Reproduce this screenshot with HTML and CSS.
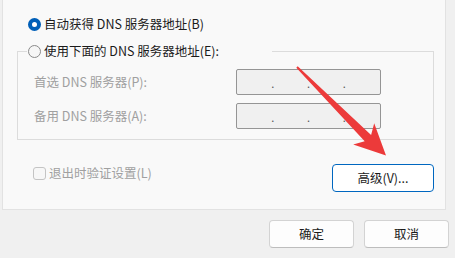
FILE: index.html
```html
<!DOCTYPE html>
<html lang="zh-CN">
<head>
<meta charset="utf-8">
<link rel="stylesheet" href="styles.css">
</head>
<body>
<div class="window">
  <div class="panel">
    <label class="radio-row first"><span class="radio on"></span><span>自动获得 DNS 服务器地址(B)</span></label>
    <fieldset class="group">
      <legend class="group-legend"><label class="radio-row"><span class="radio"></span><span>使用下面的 DNS 服务器地址(E):</span></label></legend>
      <div class="field-row">
        <span class="lbl">首选 DNS 服务器(P):</span>
        <div class="ip"><span class="seg"></span><span class="dot">.</span><span class="seg"></span><span class="dot">.</span><span class="seg"></span><span class="dot">.</span><span class="seg"></span></div>
      </div>
      <div class="field-row">
        <span class="lbl">备用 DNS 服务器(A):</span>
        <div class="ip"><span class="seg"></span><span class="dot">.</span><span class="seg"></span><span class="dot">.</span><span class="seg"></span><span class="dot">.</span><span class="seg"></span></div>
      </div>
    </fieldset>
    <div class="options-row">
      <label class="check-row"><span class="check"></span><span>退出时验证设置(L)</span></label>
      <button class="btn btn-adv">高级(V)...</button>
    </div>
  </div>
  <div class="footer">
    <button class="btn btn-foot">确定</button>
    <button class="btn btn-foot">取消</button>
  </div>
  <svg class="arrow" width="455" height="258" viewBox="0 0 455 258">
    <polygon fill="#ec3a3a" points="297.7,66.3 371.1,134.9 374.2,123.2 386,155.5 353.2,144.6 364.7,141.3 296.3,67.7"/>
  </svg>
</div>
</body>
</html>
```
FILE: styles.css
```css
* { box-sizing: border-box; }
html, body {
  margin: 0;
  padding: 0;
  background: #f0f0f0;
}
body {
  font-family: "Noto Sans CJK SC", "Noto Sans", sans-serif;
  font-size: 12.5px;
  line-height: 16px;
  color: #1b1b1b;
}
.window {
  position: relative;
  width: 455px;
  height: 258px;
  overflow: hidden;
  background: #f0f0f0;
}
.panel {
  margin-left: 2px;
  width: 444px;
  height: 210px;
  background: #f9f9f9;
  border: 1px solid #e2e2e2;
  border-top: none;
  padding: 16px 0 0 0;
}
.radio-row {
  display: flex;
  align-items: center;
  gap: 3px;
  height: 16px;
  white-space: nowrap;
}
.radio-row.first { padding-left: 25px; }
.radio {
  width: 13px;
  height: 13px;
  border-radius: 50%;
  border: 1px solid #8a8a8a;
  background: #f6f6f6;
  flex: none;
}
.radio.on {
  border: 4px solid #005fb8;
  background: #ffffff;
}
.group {
  margin: 11px 11px 0 14px;
  padding: 10px 0 10px 9px;
  border: 1px solid #dcdcdc;
  border-radius: 0;
  min-width: 0;
}
.group-legend {
  padding: 0 0 0 1px;
  width: 245px;
  height: 16px;
  float: none;
}
.field-row {
  display: grid;
  grid-template-columns: 202px 145px;
  align-items: center;
  padding-left: 7px;
  height: 26px;
  color: #a0a0a0;
}
.field-row + .field-row { margin-top: 8px; }
.lbl { white-space: nowrap; }
.ip {
  display: flex;
  align-items: center;
  height: 26px;
  background: #f0f0f0;
  border: 1px solid #959595;
  border-radius: 2px;
  color: #555;
  padding-top: 2px;
}
.seg { flex: 1; }
.dot {
  width: 0;
  display: flex;
  justify-content: center;
  font-size: 11px;
}
.options-row {
  display: flex;
  justify-content: space-between;
  align-items: flex-start;
  margin-top: 24px;
  padding: 0 11px 0 30px;
}
.check-row {
  display: flex;
  align-items: center;
  gap: 3px;
  margin-top: 1px;
  color: #a0a0a0;
  white-space: nowrap;
  height: 16px;
}
.check {
  width: 13px;
  height: 13px;
  border: 1px solid #c4c4c4;
  border-radius: 3px;
  background: #f7f7f7;
  flex: none;
}
.btn {
  font-family: inherit;
  font-size: 12.5px;
  line-height: 16px;
  color: #1b1b1b;
  background: #fdfdfd;
  border: 1px solid #d3d3d3;
  border-bottom-color: #bdbdbd;
  border-radius: 4px;
  padding: 0;
  height: 28px;
}
.btn-adv {
  width: 102px;
  border: 1px solid #0067c0;
  background: #ffffff;
}
.footer {
  display: flex;
  justify-content: flex-end;
  gap: 10px;
  padding: 10px 6px 0 0;
}
.btn-foot { width: 85px; }
.arrow {
  position: absolute;
  left: 0;
  top: 0;
  pointer-events: none;
}
```
